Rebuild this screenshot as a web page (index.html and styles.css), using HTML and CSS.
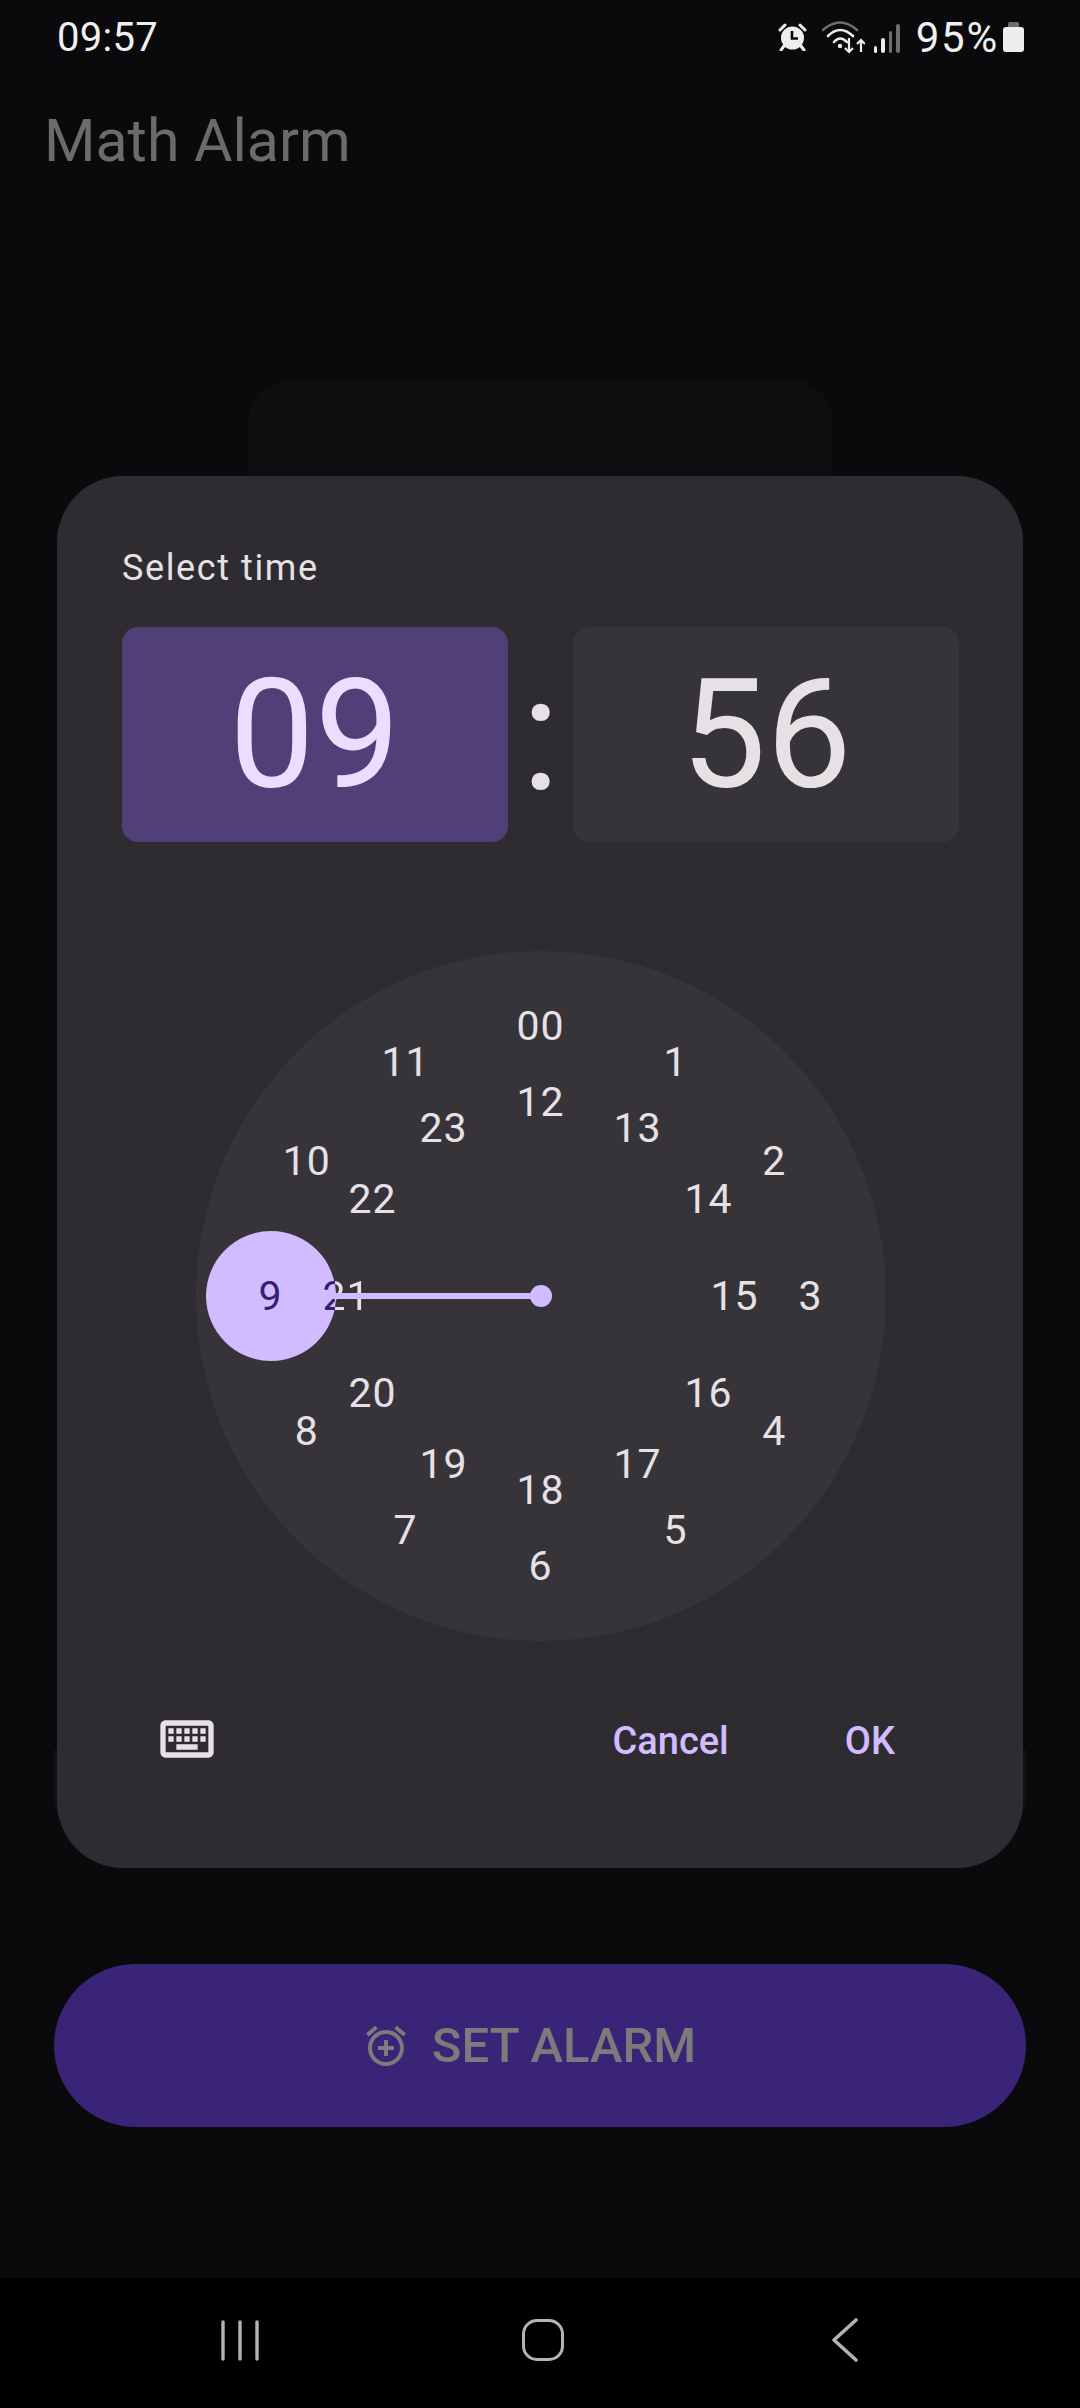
FILE: index.html
```html
<!DOCTYPE html>
<html lang="en">
<head>
    <meta charset="UTF-8">
    <meta name="viewport" content="width=device-width, initial-scale=1.0">
    <title>Math Alarm</title>
    <link rel="stylesheet" href="styles.css">
</head>
<body>
    <div class="screen">
        <div class="status-bar">
            <span class="clock">09:57</span>
            <div class="status-icons">
                <svg class="icon-alarm" width="29" height="28" viewBox="0 0 29 28">
                    <circle cx="14.5" cy="15" r="11.5" fill="#eee"/>
                    <path d="M2 7 L7 2 M22 2 L27 7" stroke="#eee" stroke-width="3" stroke-linecap="round"/>
                    <path d="M6 23 L3 27 M23 23 L26 27" stroke="#eee" stroke-width="3" stroke-linecap="round"/>
                    <path d="M14 8 V15.5 H20" fill="none" stroke="#0a090c" stroke-width="2.6"/>
                </svg>
                <svg class="icon-wifi" width="43" height="33" viewBox="0 0 43 33" fill="none">
                    <path d="M1 9 Q18 -6 35 9" stroke="#6e6e6e" stroke-width="2.6" stroke-linecap="round"/>
                    <path d="M6 15 Q18 3 31 15" stroke="#eee" stroke-width="2.6" stroke-linecap="round"/>
                    <path d="M12 21 Q18 14 25 21" stroke="#eee" stroke-width="2.6" stroke-linecap="round"/>
                    <circle cx="18" cy="25" r="2.2" fill="#eee"/>
                    <path d="M27 17 V31 M23 27 L27 31 L31 27" stroke="#eee" stroke-width="2.2"/>
                    <path d="M39 31 V19 M35 23 L39 19 L43 23" stroke="#eee" stroke-width="2.2"/>
                </svg>
                <div class="signal">
                    <span class="bar bar-1"></span>
                    <span class="bar bar-2"></span>
                    <span class="bar bar-3"></span>
                    <span class="bar bar-4"></span>
                </div>
                <span class="percent">95%</span>
                <div class="battery"></div>
            </div>
        </div>

        <div class="app">
            <h1 class="app-title">Math Alarm</h1>
            <div class="back-card"></div>
            <button class="set-alarm">
                <svg width="48" height="48" viewBox="0 0 24 24" fill="#7b7b7b">
                    <path d="M7.88 3.39L6.6 1.86 2 5.71l1.29 1.53 4.59-3.85zM22 5.72l-4.6-3.86-1.29 1.53 4.6 3.86L22 5.72zM12 4c-4.97 0-9 4.03-9 9s4.02 9 9 9c4.97 0 9-4.03 9-9s-4.03-9-9-9zm0 16c-3.87 0-7-3.13-7-7s3.13-7 7-7 7 3.13 7 7-3.13 7-7 7zm1-11h-2v3H8v2h3v3h2v-3h3v-2h-3V9z"/>
                </svg>
                <span>SET ALARM</span>
            </button>
        </div>

        <div class="nav-bar">
            <svg width="44" height="44" viewBox="0 0 44 44" stroke="#b4b4b4" stroke-width="3.4" stroke-linecap="round">
                <path d="M5 4 V41 M22 4 V41 M39 4 V41"/>
            </svg>
            <div class="nav-home"></div>
            <svg width="28" height="44" viewBox="0 0 28 44" fill="none" stroke="#b4b4b4" stroke-width="3.6" stroke-linecap="round" stroke-linejoin="round">
                <path d="M25 2 L3 22 L25 42"/>
            </svg>
        </div>

        <div class="dialog-back"></div>
        <div class="dialog">
            <div class="dialog-title">Select time</div>
            <div class="time-row">
                <div class="time-field selected">09</div>
                <div class="time-sep">:</div>
                <div class="time-field">56</div>
            </div>

            <div class="dial">
                <div class="selector"></div>
                <span class="num outer h0">00</span>
                <span class="num outer h1">1</span>
                <span class="num outer h2">2</span>
                <span class="num outer h3">3</span>
                <span class="num outer h4">4</span>
                <span class="num outer h5">5</span>
                <span class="num outer h6">6</span>
                <span class="num outer h7">7</span>
                <span class="num outer h8">8</span>
                <span class="num outer h9 on-selector">9</span>
                <span class="num outer h10">10</span>
                <span class="num outer h11">11</span>
                <span class="num inner h0">12</span>
                <span class="num inner h1">13</span>
                <span class="num inner h2">14</span>
                <span class="num inner h3">15</span>
                <span class="num inner h4">16</span>
                <span class="num inner h5">17</span>
                <span class="num inner h6">18</span>
                <span class="num inner h7">19</span>
                <span class="num inner h8">20</span>
                <span class="num inner h9 half-selector">21</span>
                <span class="num inner h10">22</span>
                <span class="num inner h11">23</span>
                <div class="hand"></div>
                <div class="hand-dot"></div>
            </div>

            <div class="dialog-actions">
                <svg width="64" height="64" viewBox="0 0 24 24" fill="#e6e1e5">
                    <path d="M20 7v10H4V7h16m0-2H4c-1.1 0-1.99.9-1.99 2L2 17c0 1.1.9 2 2 2h16c1.1 0 2-.9 2-2V7c0-1.1-.9-2-2-2zm-9 3h2v2h-2zm0 3h2v2h-2zM8 8h2v2H8zm0 3h2v2H8zm-3 0h2v2H5zm0-3h2v2H5zm3 6h8v2H8zm6-3h2v2h-2zm0-3h2v2h-2zm3 3h2v2h-2zm0-3h2v2h-2z"/>
                </svg>
                <span class="action cancel">Cancel</span>
                <span class="action ok">OK</span>
            </div>
        </div>
    </div>
</body>
</html>
```

FILE: styles.css
```css
* {
    box-sizing: border-box;
}
html, body {
    margin: 0;
    padding: 0;
    background-color: #0a090c;
}
body {
    font-family: Roboto, Arial, sans-serif;
}
.screen {
    position: relative;
    display: flex;
    flex-direction: column;
    width: 1080px;
    height: 2408px;
    overflow: hidden;
}

/* status bar */
.status-bar {
    display: flex;
    justify-content: space-between;
    align-items: center;
    height: 74px;
    padding: 0 56px 0 57px;
    color: #f0f0f0;
    font-size: 40px;
}
.clock {
    letter-spacing: 0.3px;
}
.status-icons {
    display: flex;
    align-items: center;
}
.icon-wifi {
    margin-left: 15px;
}
.signal {
    display: flex;
    align-items: flex-end;
    gap: 4px;
    height: 29px;
    margin: 2px 0 0 9px;
}
.bar {
    width: 3.5px;
    border-radius: 2px;
    background-color: #eee;
}
.bar-1 { height: 7px; }
.bar-2 { height: 15px; }
.bar-3 { height: 22px; background-color: #6e6e6e; }
.bar-4 { height: 29px; background-color: #6e6e6e; }
.percent {
    margin-left: 16px;
    font-size: 42px;
    letter-spacing: 1.8px;
}
.battery {
    position: relative;
    width: 21px;
    height: 25px;
    margin: 5px 0 0 4px;
    border-radius: 3px;
    background-color: #eee;
}
.battery::before {
    content: "";
    position: absolute;
    top: -5px;
    left: 5px;
    width: 11px;
    height: 5px;
    border-radius: 2px 2px 0 0;
    background-color: #6e6e6e;
}

/* app behind the dialog */
.app {
    flex: 1;
    display: flex;
    flex-direction: column;
    align-items: center;
}
.app-title {
    align-self: flex-start;
    margin: 33px 0 0 44px;
    color: #6b6b6b;
    font-size: 59px;
    font-weight: 400;
    line-height: 67px;
}
.back-card {
    width: 585px;
    height: 300px;
    margin-top: 206px;
    border-radius: 42px;
    background-color: #0d0e10;
}
.set-alarm {
    display: flex;
    justify-content: center;
    align-items: center;
    gap: 22px;
    width: 972px;
    height: 163px;
    margin-top: 1284px;
    padding: 0 22px 0 0;
    border: none;
    border-radius: 82px;
    background-color: #3a2477;
    color: #7b7b7b;
    font-family: inherit;
    font-size: 49px;
    font-weight: 500;
}
.nav-bar {
    display: flex;
    align-items: center;
    height: 130px;
    padding: 0 0 6px 218px;
    background-color: #000;
}
.nav-home {
    width: 42px;
    height: 42px;
    margin: 0 267px 0 260px;
    border: 3.6px solid #b4b4b4;
    border-radius: 15px;
}

/* time picker dialog */
.dialog-back {
    position: absolute;
    top: 1750px;
    left: 54px;
    width: 972px;
    height: 108px;
    border-radius: 0 0 66px 66px;
    background-color: #131215;
}
.dialog {
    position: absolute;
    top: 476px;
    left: 57px;
    display: flex;
    flex-direction: column;
    width: 966px;
    height: 1392px;
    padding: 70px 64px 0 65px;
    border-radius: 66px;
    background-color: #2e2c30;
}
.dialog-title {
    color: #e6e1e5;
    font-size: 36px;
    line-height: 44px;
    letter-spacing: 1.6px;
}
.time-row {
    display: flex;
    margin-top: 37px;
}
.time-field {
    display: flex;
    justify-content: center;
    align-items: center;
    width: 386px;
    height: 215px;
    border-radius: 16px;
    background-color: #373439;
    color: #e6e1e5;
    font-size: 152px;
}
.time-field.selected {
    background-color: #514077;
    color: #eaddff;
}
.time-sep {
    width: 66px;
    color: #e6e1e5;
    font-size: 160px;
    line-height: 215px;
    text-align: center;
}

/* clock dial */
.dial {
    position: relative;
    flex: none;
    align-self: center;
    width: 690px;
    height: 690px;
    margin-top: 109px;
    border-radius: 50%;
    background-color: #373439;
}
.selector {
    position: absolute;
    top: 280px;
    left: 10px;
    width: 130px;
    height: 130px;
    border-radius: 50%;
    background-color: #d0bcff;
}
.num {
    position: absolute;
    left: calc(50% + var(--r) * sin(var(--a)));
    top: calc(50% - var(--r) * cos(var(--a)));
    transform: translate(-50%, -50%);
    color: #e6e1e5;
    font-size: 41px;
    line-height: 1;
    letter-spacing: 1px;
}
.num.on-selector {
    color: #381e72;
}
/* 21 runs past the edge of the selector, so it changes colour there */
.num.half-selector {
    background: linear-gradient(90deg, #381e72 12px, #e6e1e5 12px);
    -webkit-background-clip: text;
    background-clip: text;
    color: transparent;
}
.outer { --r: 270px; }
.inner { --r: 194px; }
.h0 { --a: 0deg; }
.h1 { --a: 30deg; }
.h2 { --a: 60deg; }
.h3 { --a: 90deg; }
.h4 { --a: 120deg; }
.h5 { --a: 150deg; }
.h6 { --a: 180deg; }
.h7 { --a: 210deg; }
.h8 { --a: 240deg; }
.h9 { --a: 270deg; }
.h10 { --a: 300deg; }
.h11 { --a: 330deg; }
.hand {
    position: absolute;
    top: 342px;
    left: 136px;
    width: 209px;
    height: 6px;
    background-color: #d0bcff;
}
.hand-dot {
    position: absolute;
    top: 334px;
    left: 334px;
    width: 22px;
    height: 22px;
    border-radius: 50%;
    background-color: #d0bcff;
}

.dialog-actions {
    display: flex;
    align-items: center;
    height: 64px;
    margin-top: 66px;
    padding-left: 33px;
}
.action {
    margin-top: 3px;
    color: #d0bcff;
    font-size: 38px;
    font-weight: 500;
}
.cancel {
    margin-left: auto;
    margin-right: 116px;
}
.ok {
    margin-right: 64px;
}
```
